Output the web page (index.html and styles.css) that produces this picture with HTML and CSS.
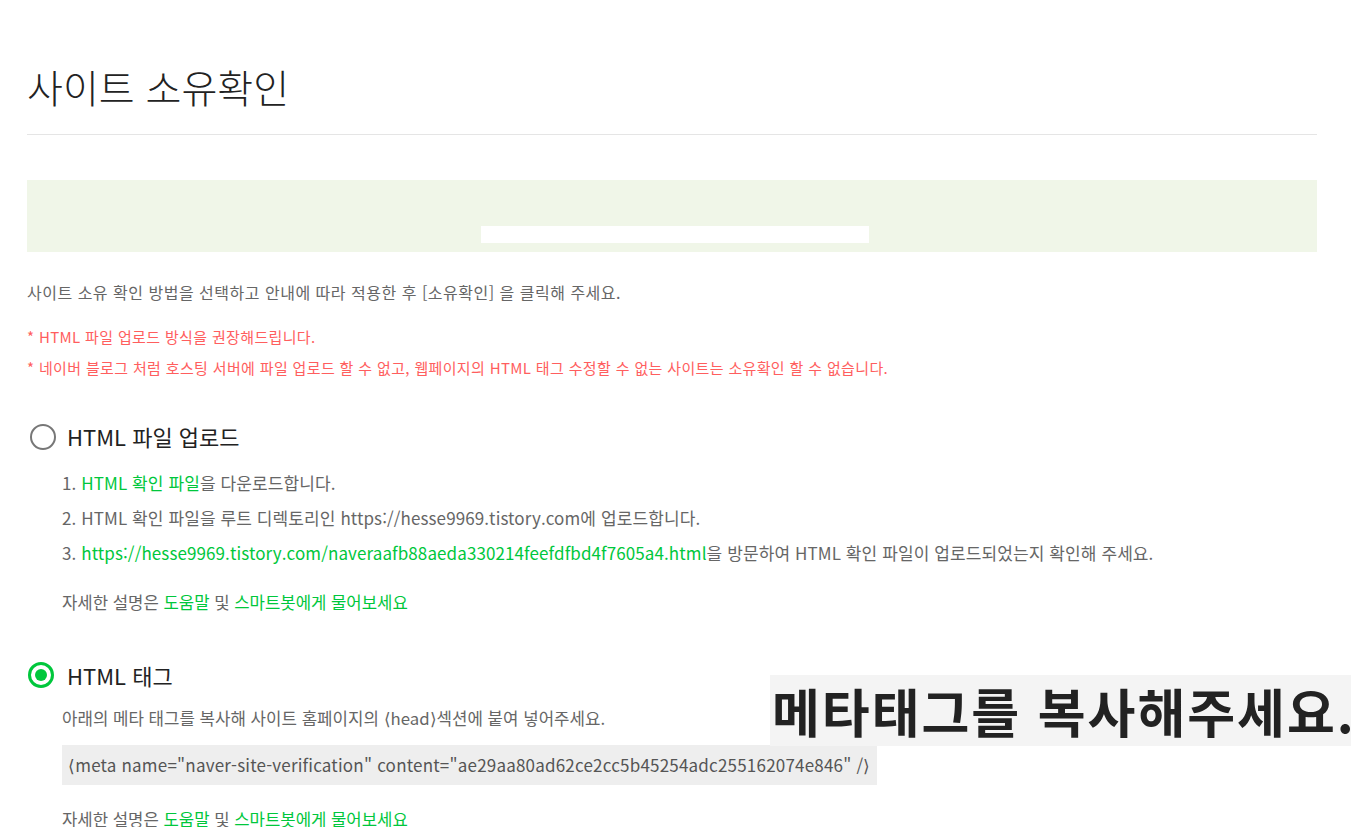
FILE: index.html
```html
<!DOCTYPE html>
<html lang="ko">
<head>
  <meta charset="UTF-8" />
  <meta name="viewport" content="width=device-width, initial-scale=1.0"/>
  <title>사이트 소유확인</title>
  <link rel="stylesheet" href="styles.css">
</head>

<body>

  <div class="page">

    <!-- TITLE -->
    <div class="page-head">
      <h1>사이트 소유확인</h1>
    </div>

    <!-- NOTICE BANNER -->
    <div class="banner">
      <div class="banner-bar"></div>
    </div>

    <p class="intro">사이트 소유 확인 방법을 선택하고 안내에 따라 적용한 후 [소유확인] 을 클릭해 주세요.</p>

    <ul class="warn">
      <li>* HTML 파일 업로드 방식을 권장해드립니다.</li>
      <li>* 네이버 블로그 처럼 호스팅 서버에 파일 업로드 할 수 없고, 웹페이지의 HTML 태그 수정할 수 없는 사이트는 소유확인 할 수 없습니다.</li>
    </ul>

    <!-- METHOD 1 : FILE UPLOAD -->
    <div class="method">
      <label class="method-head">
        <span class="radio"></span>
        <span>HTML 파일 업로드</span>
      </label>
      <div class="method-body">
        <ol class="steps">
          <li>1. <a href="#">HTML 확인 파일</a>을 다운로드합니다.</li>
          <li>2. HTML 확인 파일을 루트 디렉토리인 https://hesse9969.tistory.com에 업로드합니다.</li>
          <li>3. <a href="#">https://hesse9969.tistory.com/naveraafb88aeda330214feefdfbd4f7605a4.html</a>을 방문하여 HTML 확인 파일이 업로드되었는지 확인해 주세요.</li>
        </ol>
        <p class="help">자세한 설명은 <a href="#">도움말</a> 및 <a href="#">스마트봇에게 물어보세요</a></p>
      </div>
    </div>

    <!-- METHOD 2 : META TAG -->
    <div class="method method-tag">
      <label class="method-head">
        <span class="radio checked"></span>
        <span>HTML 태그</span>
      </label>
      <div class="method-body">
        <p class="desc">아래의 메타 태그를 복사해 사이트 홈페이지의 &lang;head&rang;섹션에 붙여 넣어주세요.</p>
        <div class="code">&lang;meta name="naver-site-verification" content="ae29aa80ad62ce2cc5b45254adc255162074e846" /&rang;</div>
        <p class="help help-tag">자세한 설명은 <a href="#">도움말</a> 및 <a href="#">스마트봇에게 물어보세요</a></p>
      </div>
    </div>

  </div>

  <!-- CAPTION OVER THE SCREENSHOT -->
  <div class="caption">메타태그를 복사해주세요.</div>

</body>
</html>
```

FILE: styles.css
```css
body {
  margin: 0;
  background: #fff;
  font-family: "Noto Sans CJK KR", "Noto Sans", sans-serif;
  color: #666;
  position: relative;
  height: 827px;
  overflow: hidden;
}

a {
  color: #00c73c;
  text-decoration: none;
}

ul, ol {
  list-style: none;
  margin: 0;
  padding: 0;
}

p {
  margin: 0;
}

.page {
  width: 1290px;
  margin-left: 27px;
}

/* TITLE */
.page-head {
  padding: 64px 0 26px;
  border-bottom: 1px solid #e5e5e5;
}

.page-head h1 {
  margin: 0;
  font-size: 39px;
  font-weight: 300;
  line-height: 44px;
  color: #222;
}

/* GREEN BANNER */
.banner {
  margin-top: 45px;
  height: 72px;
  background: #f0f6e8;
  padding-top: 46px;
  box-sizing: border-box;
}

.banner-bar {
  width: 388px;
  height: 17px;
  background: #fff;
  margin-left: 454px;
}

/* INTRO + WARNINGS */
.intro {
  margin-top: 30px;
  font-size: 16px;
  letter-spacing: 0.5px;
  line-height: 20px;
  color: #666;
}

.warn {
  margin-top: 19px;
  font-size: 15px;
  letter-spacing: 0.35px;
  line-height: 31px;
  color: #ff5e5e;
}

/* METHODS */
.method {
  margin-top: 39px;
}

.method-head {
  display: flex;
  align-items: center;
  gap: 11px;
  font-size: 22px;
  line-height: 28px;
  color: #222;
}

.radio {
  width: 22px;
  height: 22px;
  border: 2px solid #777;
  border-radius: 50%;
  margin: 2px 0 0 3px;
  display: flex;
  align-items: center;
  justify-content: center;
}

.radio.checked {
  width: 20px;
  height: 20px;
  border: 3px solid #00c73c;
  margin: 0 2px 0 1px;
}

.radio.checked::after {
  content: "";
  width: 12px;
  height: 12px;
  border-radius: 50%;
  background: #00c73c;
}

.method-body {
  padding-left: 35px;
}

.steps {
  margin-top: 15px;
  font-size: 17px;
  letter-spacing: 0.1px;
  line-height: 35px;
}

.help {
  margin-top: 20px;
  font-size: 16.7px;
  line-height: 24px;
}

.method-tag {
  margin-top: 47px;
}

.desc {
  margin-top: 17px;
  font-size: 16.8px;
  line-height: 24px;
}

.code {
  display: inline-block;
  margin-top: 15px;
  height: 40px;
  line-height: 40px;
  padding: 0 6px;
  background: #eee;
  font-size: 17px;
  letter-spacing: 0.2px;
  color: #555;
}

.help-tag {
  margin-top: 22px;
}

/* OVERLAY CAPTION */
.caption {
  position: absolute;
  left: 770px;
  top: 675px;
  width: 581px;
  height: 71px;
  line-height: 71px;
  padding-left: 2px;
  box-sizing: border-box;
  background: #f4f4f4;
  font-size: 52px;
  font-weight: 700;
  letter-spacing: 2px;
  color: #222;
  white-space: nowrap;
}
```
